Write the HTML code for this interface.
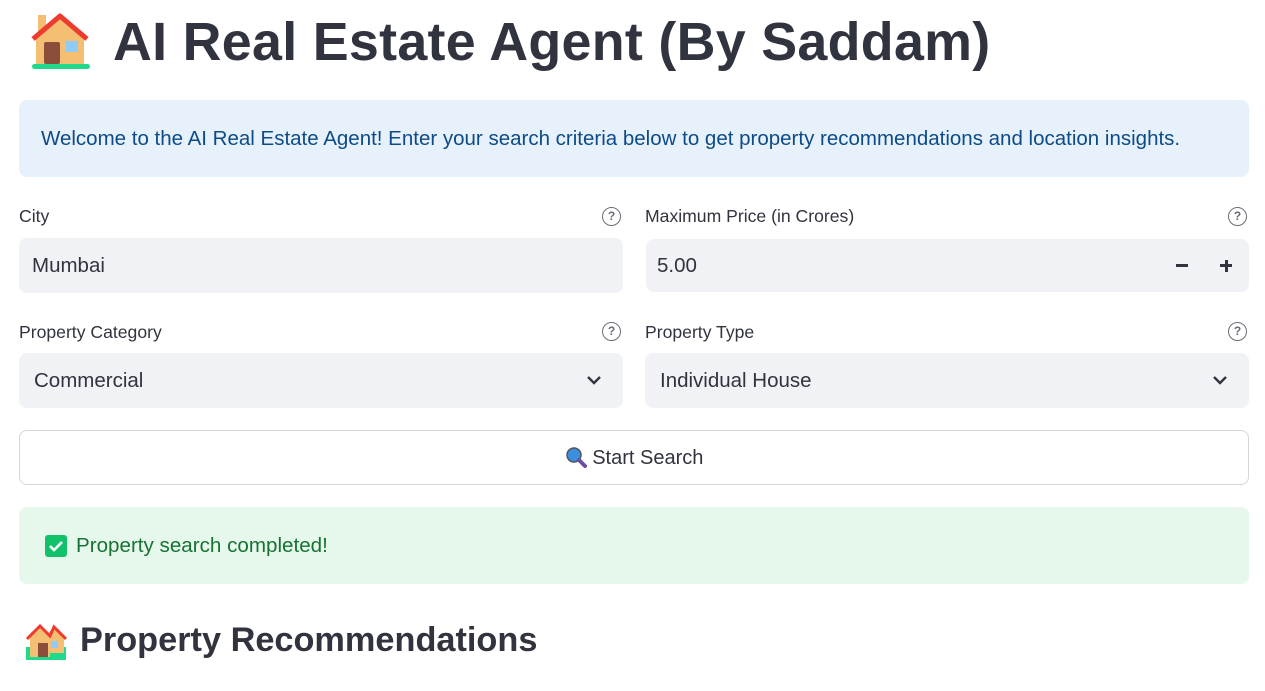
<!DOCTYPE html>
<html><head><style>
body{margin:0;background:#fff;font-family:"Liberation Sans",sans-serif;color:#31333f;width:1265px;height:691px;overflow:hidden;position:relative}
.a{position:absolute}
.lbl{font-size:17.6px;color:#31333f}
.q{width:19px;height:19px;border:1.6px solid #6b6d76;border-radius:50%;box-sizing:border-box;font-size:12px;font-weight:bold;color:#6b6d76;text-align:center;line-height:16px}
.inp{background:#f0f2f6;border-radius:8px;height:55px;font-size:20.5px;line-height:55px;box-sizing:border-box}
</style></head><body>
<svg class="a" style="left:28px;top:10px" width="64" height="60" viewBox="0 0 64 60">
<rect x="10" y="5" width="8" height="16" fill="#f5bf73"/>
<polygon points="8,26 32,5 56,26 56,54 8,54" fill="#f5bf73"/>
<polyline points="5,29 32,6 59,29" fill="none" stroke="#ee3b30" stroke-width="5" stroke-linejoin="round"/>
<rect x="16" y="32" width="16" height="22" rx="2" fill="#8b4e3b"/>
<rect x="38" y="31" width="12" height="11" fill="#8ecbf7"/>
<rect x="4" y="54" width="58" height="5" rx="2.5" fill="#20d98a"/>
</svg>
<div class="a" style="left:113px;top:11px;font-size:53.8px;font-weight:bold;letter-spacing:0.3px">AI Real Estate Agent (By Saddam)</div>
<div class="a" style="left:19px;top:100px;width:1230px;height:77px;background:#e7f1fc;border-radius:8px"></div>
<div class="a" style="left:41px;top:127px;font-size:20.5px;color:#0d4b87">Welcome to the AI Real Estate Agent! Enter your search criteria below to get property recommendations and location insights.</div>

<div class="a lbl" style="left:19px;top:206px">City</div>
<div class="a q" style="left:602px;top:207px">?</div>
<div class="a inp" style="left:19px;top:238px;width:604px;padding-left:13px">Mumbai</div>

<div class="a lbl" style="left:645px;top:206px">Maximum Price (in Crores)</div>
<div class="a q" style="left:1228px;top:207px">?</div>
<div class="a inp" style="left:646px;top:239px;width:603px;height:53px;line-height:53px;padding-left:11px">5.00</div>
<div class="a" style="left:1176px;top:264px;width:12px;height:3px;background:#31333f"></div>
<div class="a" style="left:1220px;top:264px;width:12px;height:3px;background:#31333f"></div>
<div class="a" style="left:1224.5px;top:259.5px;width:3px;height:12px;background:#31333f"></div>

<div class="a lbl" style="left:19px;top:322px">Property Category</div>
<div class="a q" style="left:602px;top:322px">?</div>
<div class="a inp" style="left:19px;top:353px;width:604px;padding-left:15px">Commercial</div>
<svg class="a" style="left:586px;top:374px" width="16" height="12"><polyline points="2,3 8,9 14,3" fill="none" stroke="#31333f" stroke-width="2.4"/></svg>

<div class="a lbl" style="left:645px;top:322px">Property Type</div>
<div class="a q" style="left:1228px;top:322px">?</div>
<div class="a inp" style="left:645px;top:353px;width:604px;padding-left:15px">Individual House</div>
<svg class="a" style="left:1212px;top:374px" width="16" height="12"><polyline points="2,3 8,9 14,3" fill="none" stroke="#31333f" stroke-width="2.4"/></svg>

<div class="a" style="left:19px;top:430px;width:1230px;height:55px;border:1px solid #d5d6da;border-radius:8px;box-sizing:border-box;text-align:center;line-height:54px;font-size:20px">
<svg width="22" height="22" viewBox="0 0 22 22" style="vertical-align:-4px"><circle cx="9" cy="9" r="7" fill="#3b8fe0" stroke="#555" stroke-width="1.5"/><line x1="14" y1="14" x2="20" y2="20" stroke="#6a4fa0" stroke-width="4" stroke-linecap="round"/></svg> Start Search</div>

<div class="a" style="left:19px;top:507px;width:1230px;height:77px;background:#e6f8ec;border-radius:8px"></div>
<div class="a" style="left:45px;top:535px;width:22px;height:22px;background:#12c26a;border-radius:3px"></div>
<svg class="a" style="left:45px;top:535px" width="22" height="22"><polyline points="5,11 9,15 17,7" fill="none" stroke="#fff" stroke-width="2.6"/></svg>
<div class="a" style="left:76px;top:534px;font-size:20.6px;color:#177233">Property search completed!</div>

<svg class="a" style="left:24px;top:621px" width="44" height="40" viewBox="0 0 44 40">
<rect x="2" y="26" width="40" height="13" fill="#20d98a"/>
<polygon points="6,16 16,6 26,16 26,36 6,36" fill="#f5bf73"/>
<polygon points="20,16 30,6 40,16 40,32 20,32" fill="#f5bf73"/>
<polyline points="3,18 16,5 26,15 30,6 42,18" fill="none" stroke="#ee3b30" stroke-width="3"/>
<rect x="14" y="22" width="10" height="14" fill="#8b4e3b"/>
<rect x="27" y="20" width="7" height="7" fill="#8ecbf7"/>
</svg>
<div class="a" style="left:80px;top:621px;font-size:34.3px;font-weight:bold">Property Recommendations</div>
</body></html>
